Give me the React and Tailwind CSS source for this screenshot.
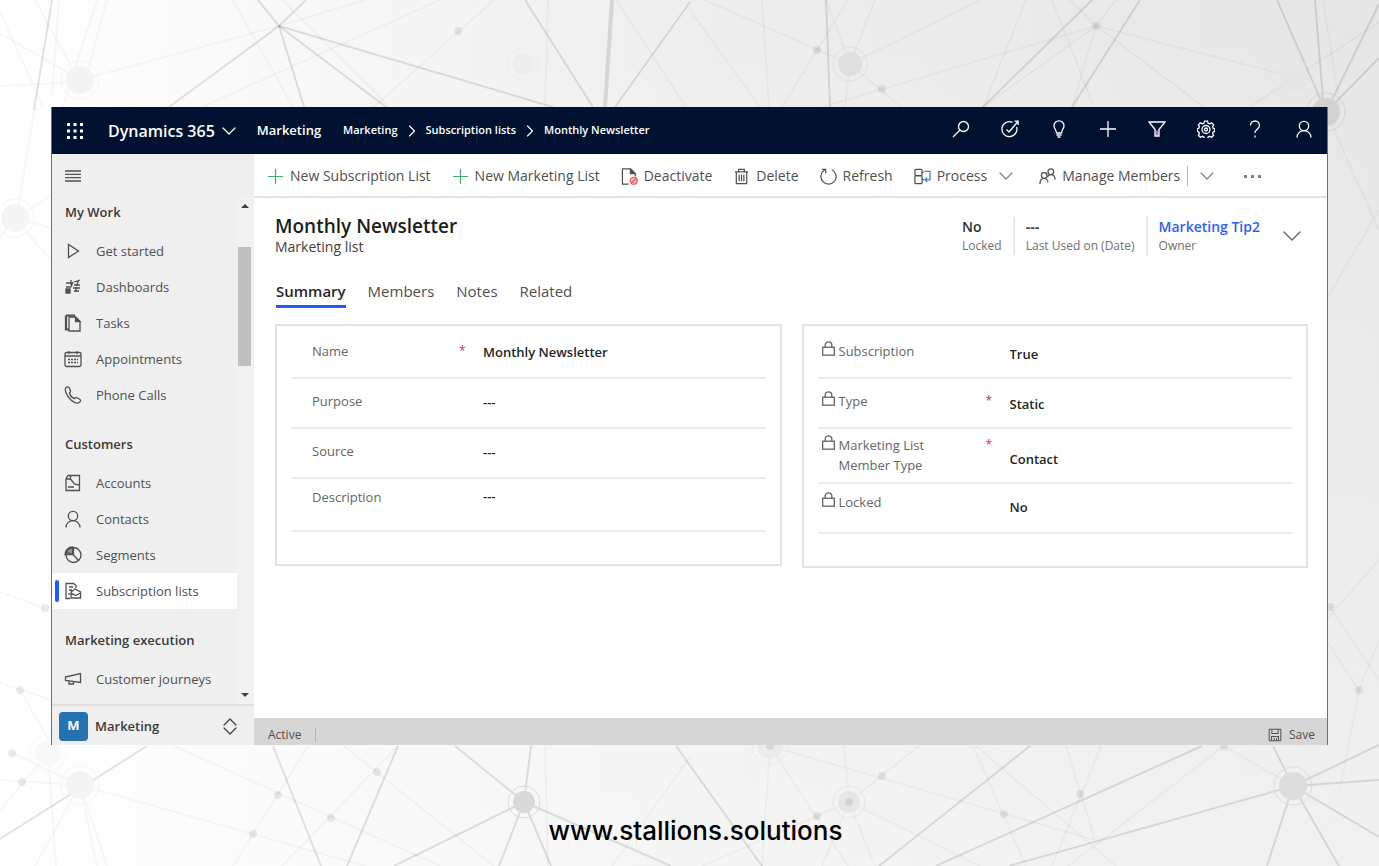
import React from "react";
import { ChevronDown, ChevronRight, ChevronUp } from "lucide-react";

const ICONS = {
  waffle: (
    <g fill="currentColor" stroke="none">
      {[1, 7.5, 14].map((y) => [1, 7.5, 14].map((x) => <rect key={`${x}-${y}`} x={x} y={y} width="3" height="3" />))}
    </g>
  ),
  search: <><circle cx="11.5" cy="6.5" r="5" /><path d="M8 10 1 17" /></>,
  target: <><path d="M15.6 7A7.5 7.5 0 1 1 11.500 2.300" /><path d="M5.500 9.500 8 12 16.500 2M13.500 1.200h3.600V5" /></>,
  bulb: <path d="M6.5 13c0-3-2.5-4-2.5-7.200a5 5 0 0 1 10 0c0 3.200-2.500 4.200-2.500 7.200zM6.500 15h5M7.500 17h3" />,
  plus: <path d="M9 1v16M1 9h16" />,
  filter: <><path d="M7.500 10.500h3v5h-3z" fill="#a678c8" stroke="none" /><path d="M1 2h16L11 9.500V16H7V9.500z" /></>,
  gear: (
    <>
      <path d="M7.500 1.200h3l.6 2 1.600.7 1.900-1 2 2-1 1.900.7 1.600 1.500.500v2.400l-1.600.6-.6 1.500 1 1.900-2 2-1.900-1-1.600.7-.6 1.700h-3l-.6-1.700-1.600-.7-1.900 1-2-2 1-1.900-.6-1.500-1.600-.6V8.900l1.500-.5.700-1.600-1-1.900 2-2 1.900 1 1.600-.7z" />
      <circle cx="9" cy="9.500" r="4" />
      <circle cx="9" cy="9.500" r="1.500" />
    </>
  ),
  help: <><path d="M4.500 5.500A4.500 4.500 0 0 1 13.500 5.500c0 3.500-4.500 3.500-4.500 7.500" /><path d="M9 15.500v2" /></>,
  person: <><circle cx="9" cy="6" r="4.700" /><path d="M2 17.500c0-4 3-6.800 7-6.800s7 2.800 7 6.800" /></>,
  menu: <path d="M1 4h16M1 7.300h16M1 10.600h16M1 14h16" />,
  play: <path d="M4.500 2.500v13L14.500 9z" />,
  dashboard: (
    <>
      <path d="M2 5h6M7 2v5M10 4l6-2M10 7h6M2 9h5M9 10h7M7 9l2-5M10 13h5M12 9v5M15 2l-3 6" />
      <path d="M2 11h4v4H2z" fill="currentColor" />
    </>
  ),
  tasks: <><path d="M2 1.500h9M2 1.500v14h3" strokeWidth="2.200" /><path d="M5 3h6.500L16 7.500V17H5z" /><path d="M11.500 3v4.500H16z" fill="currentColor" /></>,
  calendar: <><rect x="1" y="2.500" width="16" height="14" rx="1.500" /><path d="M1 6h16M5 1v3M13 1v3" /><path d="M4 9.500h10M4 12.500h10" strokeDasharray="2 1" /></>,
  phone: <path d="M2 1.500c1.500-1 3-.5 3.500.8l1 2.400c.3 1-.2 1.600-1 2.300.6 2.500 2.500 4.600 5 5.700.8-1 1.600-1.400 2.500-.9l2.700 1.500c1.300.8 1 2-.2 3-2 1.500-5.500.5-9-2.800C2.500 9.800.2 4 2 1.500z" />,
  account: <><path d="M4 1.500h11.500v15H2V5z" /><path d="M2 5h4.500l4 5 4.500 1M4 13h6M6.500 5V1.500" /></>,
  pie: <><circle cx="9.500" cy="9" r="7.500" /><path d="M9.500 1.500V9l5 5.500M9.500 9 2.500 6" /><path d="M1 8.500A7.500 7.500 0 0 1 8.500 1v7.500z" fill="currentColor" fillOpacity=".55" /></>,
  lists: <><path d="M12 6V3.500L9.500 1.500H2v15h4" /><path d="M5 5h4M5 8h3M7 10l4-3 5.500 3v6H7zM7 11l4.500 2.500L16.500 11M5 11v2" /></>,
  megaphone: <><path d="M1.500 7 16.500 3.500v9L1.500 10.500z" /><path d="M5 11v3h4.500v-2.500" /></>,
  deactivate: (
    <>
      <path d="M8 17H1.500V1H10l5 5v3" />
      <path d="M10 1 15 6H10z" fill="currentColor" />
      <g stroke="#ef5350"><circle cx="13.500" cy="13.500" r="3.700" fill="#f8b4b2" /><path d="m11 16 5-5" /></g>
    </>
  ),
  trash: <><path d="M2 4h14M6 4V1.500h6V4M3.500 4v12.500h11V4" /><path d="M6.500 7v7M9 7v7M11.500 7v7" /></>,
  refresh: <><path d="M12.500 1.800a8 8 0 1 1-7.700.4" /><path d="M2 1.500H6v4" /></>,
  process: (
    <>
      <rect x="1" y="1.500" width="7.500" height="6.500" rx="1" />
      <rect x="1" y="8" width="7.500" height="8.500" rx="1" />
      <path d="M8.500 4.500h2M8.500 12h2" />
      <path d="M11 3.500h6v9h-4.500M14 10l-2.500 2.500L14 15" stroke="#3b86c9" />
    </>
  ),
  members: <><circle cx="5.500" cy="8" r="3" /><path d="M1 17c0-4 2-6 4.500-6S9.500 13 9.500 15" /><circle cx="12.500" cy="4" r="3" /><path d="M9 9.500c.5-1.500 2-2.500 3.500-2.500 2.500 0 4.500 2 4.500 5.500" /></>,
  lock: <g strokeWidth="1.600"><rect x="2" y="7.500" width="14" height="9.500" /><path d="M5 7.500V5a4 4 0 0 1 8 0v2.500" /></g>,
  save: <><rect x="1.500" y="1.500" width="15" height="15" rx="1" /><path d="M5 2v5h8V2M4.500 16.500V11h9v5.500M8 13v3M11 13v3" /></>,
};

function Icon({ name, className = "size-4" }) {
  return (
    <svg viewBox="0 0 18 18" fill="none" stroke="currentColor" strokeWidth="1.3" className={`shrink-0 ${className}`} aria-hidden="true">
      {ICONS[name]}
    </svg>
  );
}

// Straight links of the network pattern: x1, y1, x2, y2
const DARK_LINES = [
  [52, 0, 34, 110], [279, 26, 258, 0], [279, 26, 306, 0], [279, 26, 169, 107], [279, 26, 304, 107], [279, 26, 386, 107],
  [279, 26, 553, 107], [525, 0, 593, 107], [690, 2, 615, 107], [826, 0, 830, 107], [1092, 0, 983, 107], [1140, 0, 1072, 107],
  [1277, 0, 1326, 112], [1315, 0, 1324, 112], [1379, 4, 1326, 112], [1379, 58, 1326, 112], [147, 746, 0, 839],
  [273, 746, 321, 866], [398, 746, 347, 866], [524, 802, 455, 746], [524, 802, 531, 746], [524, 802, 394, 866],
  [524, 802, 499, 866], [524, 802, 551, 866], [524, 802, 671, 866], [676, 746, 762, 866], [1030, 746, 879, 866],
  [1202, 746, 936, 866], [1293, 786, 1009, 866], [1293, 786, 1273, 746], [1293, 786, 1379, 745], [1293, 786, 1379, 780],
  [1293, 786, 1379, 837], [1293, 786, 1339, 866], [1293, 786, 1267, 866],
];

const FAINT_LINES = [
  [279, 26, 80, 80], [279, 26, 365, 0], [494, 0, 374, 107], [440, 0, 202, 107], [233, 0, 293, 107], [282, 0, 390, 107],
  [616, 0, 686, 107], [548, 0, 545, 107], [97, 0, 52, 140], [107, 0, 88, 70], [35, 0, 73, 70], [0, 33, 80, 80],
  [0, 86, 80, 82], [59, 0, 52, 95], [0, 12, 43, 107], [1096, 26, 1070, 0], [1096, 26, 1116, 0],
  [1096, 26, 822, 107], [1096, 26, 983, 107], [1096, 26, 1072, 107], [1096, 26, 1204, 107], [1096, 26, 1305, 80],
  [705, 0, 850, 64], [782, 107, 848, 0], [850, 64, 980, 0], [850, 64, 875, 0], [850, 64, 826, 0], [850, 64, 845, 107],
  [850, 64, 901, 107], [762, 0, 769, 107], [690, 10, 760, 107], [1026, 0, 983, 107], [1052, 0, 1094, 107],
  [1323, 0, 1340, 107], [1250, 107, 1379, 22], [1326, 112, 1379, 230], [1326, 300, 1379, 210], [1326, 620, 1379, 560],
  [35, 108, 18, 208], [15, 218, 52, 195], [15, 218, 52, 228], [15, 218, 52, 262], [15, 218, 0, 238],
  [0, 592, 45, 608], [0, 683, 52, 700], [20, 690, 52, 745],
  [1359, 690, 1326, 640], [1359, 690, 1379, 640], [1359, 690, 1340, 790], [1330, 607, 1379, 680],
  [12, 753, 80, 785], [0, 780, 80, 785], [80, 785, 365, 866], [80, 785, 35, 866], [80, 785, 97, 866], [80, 785, 107, 866],
  [174, 746, 440, 866], [308, 746, 233, 866], [344, 746, 494, 866], [398, 746, 282, 866], [545, 746, 548, 866],
  [690, 757, 612, 866], [844, 746, 849, 802], [849, 802, 919, 746], [849, 802, 702, 866], [849, 802, 980, 866],
  [849, 802, 875, 866], [849, 802, 822, 866], [770, 746, 762, 866], [770, 746, 848, 866], [770, 746, 1095, 840],
  [1101, 746, 1052, 866], [1066, 746, 1095, 840], [973, 746, 1026, 866], [976, 746, 1116, 866], [1224, 746, 1068, 866],
  [1224, 746, 1293, 786], [48, 753, 0, 810], [48, 753, 56, 866],
];

// Small dots: x, y
const DOTS = [
  [458, 31], [817, 50], [882, 89], [1096, 26], [45, 608], [20, 690], [1330, 607], [1359, 690], [12, 753], [22, 782], [253, 834],
  [278, 795], [331, 818], [377, 772], [882, 776], [817, 816], [849, 802], [1004, 814], [1080, 794], [1224, 746], [770, 746],
];

// Ringed nodes: x, y, radius, fill
const NODES = [
  [80, 80, 14, "#f3f3f3"], [523, 64, 11, "#ededed"], [850, 64, 12, "#dfdfdf"], [1326, 112, 14, "#d2d2d2"], [15, 218, 14, "#f5f5f5"],
  [48, 753, 13, "#f8f8f8"], [80, 785, 14, "#f3f5f5"], [524, 802, 11, "#d9d9d9"], [849, 802, 11, "#e6e6e6"],
  [770, 746, 13, "#ebebeb"], [1293, 786, 14, "#dcdcdc"], [1295, 80, 14, "#e6e6e6"],
];

function NetworkBackdrop() {
  return (
    <>
      <div className="absolute inset-0 bg-linear-to-t from-white/40 to-transparent" />
      <svg className="absolute inset-0 h-full w-full" viewBox="0 0 1379 866" preserveAspectRatio="none" aria-hidden="true">
        <g stroke="#000" strokeOpacity=".03" strokeWidth="2">
          {FAINT_LINES.map(([x1, y1, x2, y2], i) => <line key={i} x1={x1} y1={y1} x2={x2} y2={y2} />)}
        </g>
        <g stroke="#000" strokeOpacity=".11" strokeWidth="2">
          {DARK_LINES.map(([x1, y1, x2, y2], i) => <line key={i} x1={x1} y1={y1} x2={x2} y2={y2} />)}
          <line x1="612" y1="0" x2="605" y2="107" strokeWidth="4" />
        </g>
        {NODES.map(([x, y, r, fill]) => (
          <g key={`${x}-${y}`}>
            <circle cx={x} cy={y} r={r} fill={fill} />
            <circle cx={x} cy={y} r={r + 5} fill="none" stroke={fill} />
          </g>
        ))}
        <g fill="#000" fillOpacity=".08">
          {DOTS.map(([x, y]) => <circle key={`${x}-${y}`} cx={x} cy={y} r="4" />)}
        </g>
      </svg>
    </>
  );
}

const topActions = [
  ["search", "Search"], ["target", "Task flow"], ["bulb", "Assistant"], ["plus", "Quick create"],
  ["filter", "Advanced find"], ["gear", "Settings"], ["help", "Help"], ["person", "Account"],
];

function TopBar() {
  return (
    <header className="flex h-[47px] shrink-0 items-center justify-between bg-[#00122f] px-[14px] text-white">
      <div className="flex items-center">
        <button aria-label="App launcher"><Icon name="waffle" className="size-[18px]" /></button>
        <button className="ml-6 flex items-center gap-[2px] text-base font-semibold">
          Dynamics 365
          <ChevronDown className="size-6" strokeWidth={1.3} />
        </button>
        <a href="#marketing" className="ml-4 text-[13px] font-semibold">Marketing</a>
        <nav aria-label="Breadcrumb" className="ml-[22px] flex items-center gap-1 text-[11px] font-semibold">
          <a href="#marketing">Marketing</a>
          <ChevronRight className="size-5" strokeWidth={1.4} />
          <a href="#lists">Subscription lists</a>
          <ChevronRight className="size-5" strokeWidth={1.4} />
          <a href="#newsletter">Monthly Newsletter</a>
        </nav>
      </div>
      <div className="flex items-center gap-[31px] pb-[3px]">
        {topActions.map(([icon, label]) => (
          <button key={icon} aria-label={label}><Icon name={icon} className="size-[18px]" /></button>
        ))}
      </div>
    </header>
  );
}

const navGroups = [
  {
    title: "My Work",
    items: [["play", "Get started"], ["dashboard", "Dashboards"], ["tasks", "Tasks"], ["calendar", "Appointments"], ["phone", "Phone Calls"]],
  },
  {
    title: "Customers",
    items: [["account", "Accounts"], ["person", "Contacts"], ["pie", "Segments"], ["lists", "Subscription lists"]],
  },
  { title: "Marketing execution", items: [["megaphone", "Customer journeys"]] },
];

function Sidebar() {
  return (
    <aside className="flex w-[202px] shrink-0 flex-col bg-[#efefef] text-[13px] text-[#505050]">
      <div className="flex h-[43px] items-center px-3">
        <button aria-label="Toggle navigation"><Icon name="menu" className="size-[18px]" /></button>
      </div>
      <div className="flex flex-1">
        <nav className="flex flex-1 flex-col gap-4">
          {navGroups.map((group) => (
            <div key={group.title}>
              <h2 className="mb-[6px] pl-[13px] leading-[30px] font-semibold text-[#3a3a3a]">{group.title}</h2>
              {group.items.map(([icon, label]) => {
                const selected = label === "Subscription lists";
                return (
                  <a
                    key={label}
                    href="#nav"
                    aria-current={selected ? "page" : undefined}
                    className={`flex h-9 items-center pr-2 pl-[3px] ${selected ? "bg-white" : ""}`}
                  >
                    <span className={`h-[22px] w-1 ${selected ? "rounded-sm bg-[#1f5bff]" : ""}`} />
                    <Icon name={icon} className="ml-[5px] size-[18px]" />
                    <span className="ml-[14px] pt-px whitespace-nowrap">{label}</span>
                  </a>
                );
              })}
            </div>
          ))}
        </nav>
        <div className="flex w-[17px] flex-col items-center bg-[#f1f1f1] pt-[7px] pr-[2px] pb-[7px]">
          <span className="border-x-4 border-b-4 border-x-transparent border-b-[#404040]" />
          <span className="mt-[39px] h-[119px] w-[13px] bg-[#bfbfbf]" />
          <span className="mt-auto border-x-4 border-t-4 border-x-transparent border-t-[#404040]" />
        </div>
      </div>
      <button className="flex h-[41px] items-center border-t-2 border-[#e0e0e0] pt-px pr-3 pl-[7px] font-semibold text-[#3a3a3a]">
        <span className="flex size-[29px] items-center justify-center rounded-sm bg-[#2472b0] font-bold text-white">M</span>
        <span className="ml-[7px] pt-px">Marketing</span>
        <span className="ml-auto flex flex-col">
          <ChevronUp className="-mb-[15px] size-6" strokeWidth={1.2} />
          <ChevronDown className="size-6" strokeWidth={1.2} />
        </span>
      </button>
    </aside>
  );
}

function Command({ icon, label, iconClass = "size-[17px]" }) {
  return (
    <button className="flex items-center gap-[6px] whitespace-nowrap">
      <Icon name={icon} className={iconClass} />
      {label}
    </button>
  );
}

function CommandBar() {
  return (
    <div className="flex h-11 shrink-0 items-center gap-[21px] border-b-2 border-[#e2e2e2] pt-[2px] pl-[13px] text-sm text-[#505050]">
      <Command icon="plus" label="New Subscription List" iconClass="size-[17px] text-[#3fae6a]" />
      <Command icon="plus" label="New Marketing List" iconClass="size-[17px] text-[#3fae6a]" />
      <Command icon="deactivate" label="Deactivate" />
      <Command icon="trash" label="Delete" />
      <Command icon="refresh" label="Refresh" />
      <div className="flex items-center gap-[7px]">
        <Command icon="process" label="Process" />
        <button aria-label="More process options" className="text-[#808080]"><ChevronDown className="size-6" strokeWidth={1.2} /></button>
      </div>
      <div className="flex items-center gap-[7px]">
        <Command icon="members" label="Manage Members" />
        <span className="h-5 w-px bg-[#b8b8b8]" />
        <button aria-label="More member options" className="text-[#808080]"><ChevronDown className="size-6" strokeWidth={1.2} /></button>
      </div>
      <button aria-label="More commands" className="flex gap-1 pl-1">
        <span className="size-[3px] bg-[#808080]" />
        <span className="size-[3px] bg-[#808080]" />
        <span className="size-[3px] bg-[#808080]" />
      </button>
    </div>
  );
}

function RecordHeader() {
  return (
    <div className="flex justify-between pt-4 pr-[19px] pl-[21px]">
      <div>
        <h1 className="text-[19px] leading-6 font-semibold text-[#1c1c1c]">Monthly Newsletter</h1>
        <p className="text-sm leading-[18px] text-[#404040]">Marketing list</p>
      </div>
      <div className="flex items-center pt-[2px] text-xs leading-[18px] text-[#707070]">
        <div className="pr-[11px]">
          <p className="text-sm leading-5 font-semibold text-[#303030]">No</p>
          <p>Locked</p>
        </div>
        <div className="border-x-2 border-[#ebebeb] px-[11px]">
          <p className="text-sm leading-5 font-bold text-[#505050]">---</p>
          <p>Last Used on (Date)</p>
        </div>
        <div className="pl-[11px]">
          <a href="#owner" className="block text-sm leading-5 font-semibold text-[#2a62f5]">Marketing Tip2</a>
          <p>Owner</p>
        </div>
        <button aria-label="Expand header" className="ml-4"><ChevronDown className="size-8" strokeWidth={1.2} /></button>
      </div>
    </div>
  );
}

function Field({ id, label, value, locked, required, rowClass = "h-[50px]", labelClass = "pt-3", inputClass = "" }) {
  return (
    <div className={`flex border-b-2 border-[#ececec] ${rowClass}`}>
      <label htmlFor={id} className={`flex w-[168px] items-start leading-5 text-[#666666] ${labelClass}`}>
        {locked && (
          <span className="w-[6px] shrink-0">
            <Icon name="lock" className="ml-[3px] size-[15px]" />
          </span>
        )}
        <span className={locked ? "w-[130px] pl-[15px]" : "pl-[21px]"}>{label}</span>
      </label>
      <span className={`w-6 shrink-0 text-xs leading-5 text-[#e3263c] ${labelClass}`}>{required ? "*" : ""}</span>
      <input
        id={id}
        defaultValue={value}
        readOnly={locked}
        required={required}
        className={`w-0 min-w-0 flex-1 bg-transparent font-semibold text-[#262626] outline-none ${inputClass}`}
      />
    </div>
  );
}

function SummaryForm() {
  return (
    <form className="flex items-start gap-5 pt-4 pr-[19px] pl-[21px] text-[13px]">
      <section className="flex-1 border-2 border-[#e2e2e2] px-[14px] pt-[3px] pb-8">
        <Field id="name" label="Name" value="Monthly Newsletter" required />
        <Field id="purpose" label="Purpose" value="---" />
        <Field id="source" label="Source" value="---" />
        <Field id="description" label="Description" value="---" rowClass="h-[53px]" labelClass="pt-2" inputClass="pb-4" />
      </section>
      <section className="flex-1 border-2 border-[#e2e2e2] px-[14px] pt-[3px] pb-8">
        <Field id="subscription" label="Subscription" value="True" locked inputClass="pt-1" />
        <Field id="type" label="Type" value="Static" locked required inputClass="pt-1" />
        <Field id="memberType" label="Marketing List Member Type" value="Contact" locked required rowClass="h-[55px]" labelClass="pt-[6px]" inputClass="pt-2" />
        <Field id="locked" label="Locked" value="No" locked labelClass="pt-2" />
      </section>
    </form>
  );
}

const tabs = ["Summary", "Members", "Notes", "Related"];

export default function App() {
  return (
    <div className="relative flex min-h-screen flex-col bg-linear-to-r from-white via-[#eeeeee] to-[#e6e6e6] px-[51px] pt-[107px] font-['Open_Sans','Noto_Sans',sans-serif]">
      <NetworkBackdrop />
      <div className="relative flex flex-1 flex-col border-x border-[#6b6f76] bg-white">
        <TopBar />
        <div className="flex flex-1">
          <Sidebar />
          <main className="flex min-w-0 flex-1 flex-col">
            <CommandBar />
            <RecordHeader />
            <div role="tablist" className="flex gap-[22px] pt-[23px] pl-[22px] text-[15px] leading-6 text-[#505050]">
              {tabs.map((tab) => (
                <button
                  key={tab}
                  role="tab"
                  type="button"
                  aria-selected={tab === "Summary"}
                  className={`border-b-[3px] pb-[2px] ${tab === "Summary" ? "border-[#1f5bff] font-semibold text-[#262626]" : "border-transparent"}`}
                >
                  {tab}
                </button>
              ))}
            </div>
            <SummaryForm />
            <footer className="mt-auto flex h-[27px] items-center justify-between bg-[#d6d6d6] pt-[6px] pr-3 pl-[14px] text-xs text-[#505050]">
              <span className="flex items-center gap-[14px]">
                Active
                <span className="h-[14px] w-px bg-[#b4b4b4]" />
              </span>
              <button className="flex items-center gap-[7px]">
                <Icon name="save" className="size-[14px]" />
                Save
              </button>
            </footer>
          </main>
        </div>
      </div>
      <p className="relative flex h-[121px] shrink-0 justify-center pt-[70px] pl-3 font-['Inter','Lato',sans-serif] text-[26px] leading-8 font-medium text-black">
        <a href="#site">www.stallions.solutions</a>
      </p>
    </div>
  );
}
